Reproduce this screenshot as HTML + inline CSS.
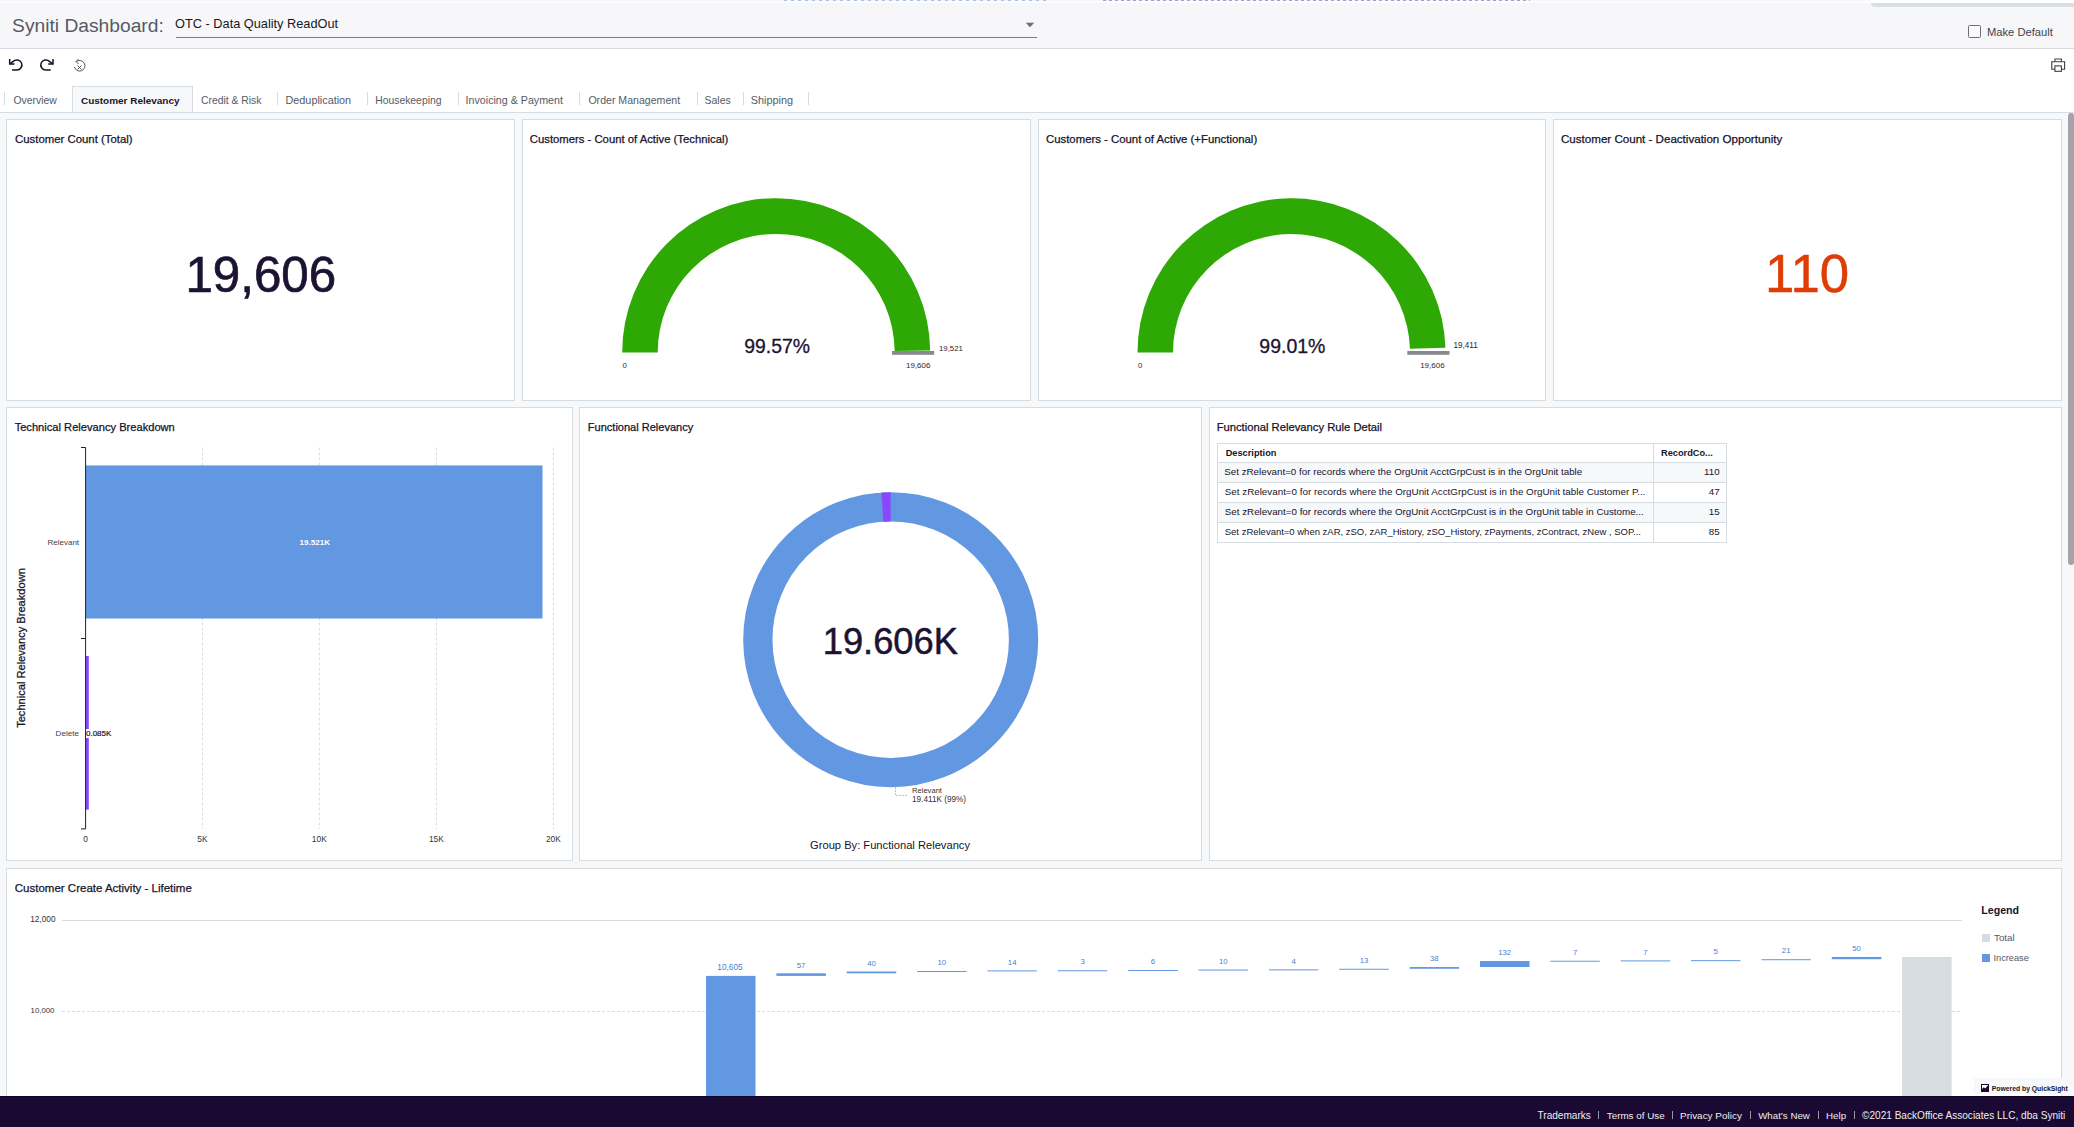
<!DOCTYPE html><html><head><meta charset="utf-8"><style>
html,body{margin:0;padding:0;width:2074px;height:1127px;overflow:hidden;background:#f7f8fa;}
body{position:relative;font-family:"Liberation Sans",sans-serif;}
.t{position:absolute;white-space:nowrap;line-height:1;}
.s{-webkit-text-stroke:0.25px currentColor;}
.r{position:absolute;}
</style></head><body>
<div class="r" style="left:0px;top:0px;width:2074px;height:48px;background:#f7f7fa;"></div><div class="r" style="left:0px;top:1px;width:2074px;height:2px;background:#fdfdfe;"></div><div class="r" style="left:780px;top:0px;width:270px;height:1px;background:repeating-linear-gradient(90deg,transparent 0 4px,rgba(80,120,220,.45) 4px 7px);"></div><div class="r" style="left:1100px;top:0px;width:430px;height:1px;background:repeating-linear-gradient(90deg,transparent 0 3px,rgba(70,90,220,.55) 3px 6px);"></div><div class="r" style="left:0px;top:48px;width:2074px;height:1px;background:#d5dde2;"></div><div class="r" style="left:1871px;top:0px;width:203px;height:3px;background:#fff;"></div><div class="r" style="left:1871px;top:3px;width:203px;height:4px;background:#d9e0e4;border-bottom-left-radius:4px;"></div><div id="t1" class="t " style="left:12.10px;top:16px;font-size:19.231px;color:#545b64;">Syniti Dashboard:</div><div id="t2" class="t " style="left:175.10px;top:18px;font-size:12.75px;color:#16191f;">OTC - Data Quality ReadOut</div><div class="r" style="left:176px;top:37px;width:861px;height:1px;background:#7d7d80;"></div><svg class="r" style="left:0;top:0" width="2074" height="1127" ><path d="M1025.8 22.8 L1034.2 22.8 L1030 27.2 Z" fill="#6e6e72"/></svg><div class="r" style="left:1968px;top:25px;width:13px;height:13px;box-sizing:border-box;border:1px solid #6b6f76;border-radius:1.5px;background:#fafafa;"></div><div id="t3" class="t " style="left:1986.98px;top:27px;font-size:11.186px;color:#3f444b;">Make Default</div><div class="r" style="left:0px;top:49px;width:2074px;height:63px;background:#fff;"></div><svg class="r" style="left:0;top:50px" width="100" height="30">
<g fill="none" stroke="#16132b" stroke-width="1.5" stroke-linejoin="miter">
<path d="M9.67 8.9 V14.0 H14.5"/>
<path d="M9.9 13.8 L13.28 11.38 A5.05 5.05 0 1 1 16.85 20.0 H12"/>
<path d="M53.03 8.9 V14.0 H48.2"/>
<path d="M52.8 13.8 L49.42 11.38 A5.05 5.05 0 1 0 45.85 20.0 H50.7"/>
</g>
<g fill="none" stroke="#555" stroke-width="1">
<path d="M78.5 9 L76 11.5 L78.5 14"/>
<path d="M76.5 11.5 A5.3 5.3 0 1 1 74.5 17"/>
<path d="M77.5 15.5 L81.5 19.5 M81.5 15.5 L77.5 19.5"/>
</g></svg><svg class="r" style="left:2040px;top:50px" width="34" height="30">
<g fill="none" stroke="#3d3d45" stroke-width="1.1">
<path d="M14.9 11.8 V9 H21.4 V11.8"/>
<path d="M14.9 19.3 H11.8 V11.8 H24.6 V19.3 H21.4"/>
<rect x="14.9" y="15.9" width="6.5" height="5.4"/>
</g></svg><div class="r" style="left:72px;top:86px;width:121px;height:27px;box-sizing:border-box;border:1px solid #d5dde2;border-bottom:none;background:#f7f8fa;"></div><div class="r" style="left:0px;top:112px;width:2074px;height:1px;background:#d5dde2;"></div><div class="r" style="left:4px;top:92px;width:1px;height:13px;background:#d5dde2;"></div><div class="r" style="left:277px;top:92px;width:1px;height:13px;background:#d5dde2;"></div><div class="r" style="left:367px;top:92px;width:1px;height:13px;background:#d5dde2;"></div><div class="r" style="left:458px;top:92px;width:1px;height:13px;background:#d5dde2;"></div><div class="r" style="left:579px;top:92px;width:1px;height:13px;background:#d5dde2;"></div><div class="r" style="left:697px;top:92px;width:1px;height:13px;background:#d5dde2;"></div><div class="r" style="left:743px;top:92px;width:1px;height:13px;background:#d5dde2;"></div><div class="r" style="left:808px;top:92px;width:1px;height:13px;background:#d5dde2;"></div><div id="t4" class="t " style="left:13.38px;top:96px;font-size:10.435px;color:#545b64;">Overview</div><div id="t5" class="t " style="left:201.00px;top:96px;font-size:10.379px;color:#545b64;">Credit &amp; Risk</div><div id="t6" class="t " style="left:285.50px;top:95px;font-size:10.846px;color:#545b64;">Deduplication</div><div id="t7" class="t " style="left:375.24px;top:96px;font-size:10.366px;color:#545b64;">Housekeeping</div><div id="t8" class="t " style="left:465.60px;top:95px;font-size:10.684px;color:#545b64;">Invoicing &amp; Payment</div><div id="t9" class="t " style="left:588.38px;top:95px;font-size:10.585px;color:#545b64;">Order Management</div><div id="t10" class="t " style="left:704.50px;top:95px;font-size:10.5px;color:#545b64;">Sales</div><div id="t11" class="t " style="left:750.74px;top:95px;font-size:10.902px;color:#545b64;">Shipping</div><div id="t12" class="t " style="left:81.00px;top:96px;font-size:9.965px;color:#16132b;font-weight:700;">Customer Relevancy</div><div class="r" style="left:0px;top:113px;width:2074px;height:983px;background:#f7f8fa;"></div><div class="r" style="left:6px;top:119px;width:509px;height:282px;box-sizing:border-box;border:1px solid #d5dde2;background:#fff;"></div><div class="r" style="left:522px;top:119px;width:509px;height:282px;box-sizing:border-box;border:1px solid #d5dde2;background:#fff;"></div><div class="r" style="left:1038px;top:119px;width:508px;height:282px;box-sizing:border-box;border:1px solid #d5dde2;background:#fff;"></div><div class="r" style="left:1553px;top:119px;width:509px;height:282px;box-sizing:border-box;border:1px solid #d5dde2;background:#fff;"></div><div class="r" style="left:6px;top:407px;width:567px;height:454px;box-sizing:border-box;border:1px solid #d5dde2;background:#fff;"></div><div class="r" style="left:579px;top:407px;width:623px;height:454px;box-sizing:border-box;border:1px solid #d5dde2;background:#fff;"></div><div class="r" style="left:1209px;top:407px;width:853px;height:454px;box-sizing:border-box;border:1px solid #d5dde2;background:#fff;"></div><div class="r" style="left:6px;top:868px;width:2056px;height:260px;box-sizing:border-box;border:1px solid #d5dde2;background:#fff;"></div><div id="t13" class="t s" style="left:15.00px;top:134px;font-size:11.384px;color:#16132b;">Customer Count (Total)</div><div id="t14" class="t s" style="left:529.82px;top:134px;font-size:11.319px;color:#16132b;">Customers - Count of Active (Technical)</div><div id="t15" class="t s" style="left:1046.00px;top:134px;font-size:11.362px;color:#16132b;">Customers - Count of Active (+Functional)</div><div id="t16" class="t s" style="left:1561.00px;top:134px;font-size:11.598px;color:#16132b;">Customer Count - Deactivation Opportunity</div><div id="t17" class="t s" style="left:14.64px;top:422px;font-size:11.138px;color:#16132b;">Technical Relevancy Breakdown</div><div id="t18" class="t s" style="left:587.82px;top:422px;font-size:11.044px;color:#16132b;">Functional Relevancy</div><div id="t19" class="t s" style="left:1216.64px;top:422px;font-size:11.242px;color:#16132b;">Functional Relevancy Rule Detail</div><div id="t20" class="t s" style="left:14.82px;top:883px;font-size:11.518px;color:#16132b;">Customer Create Activity - Lifetime</div><div id="t21" class="t " style="left:-39.22px;width:600px;text-align:center;top:250px;font-size:49.283px;color:#1b1331;-webkit-text-stroke:0.7px currentColor;">19,606</div><div id="t22" class="t " style="left:1507.14px;width:600px;text-align:center;top:248px;font-size:52.767px;color:#e03c06;-webkit-text-stroke:0.5px currentColor;">110</div><svg class="r" style="left:0;top:0" width="2074" height="1127" ><path d="M622.20 352.50 A154 154 0 0 1 930.19 350.42 L894.69 350.90 A118.5 118.5 0 0 0 657.70 352.50 Z" fill="#2ea805"/><rect x="892.0" y="351.0" width="42.2" height="3.8" fill="#8a898f"/></svg><div id="t23" class="t " style="left:622.60px;top:362px;font-size:7.8px;color:#2b2838;">0</div><div id="t24" class="t " style="right:1143.62px;top:362px;font-size:7.972px;color:#2b2838;">19,606</div><div id="t25" class="t " style="left:939.00px;top:345px;font-size:7.828px;color:#2b2838;">19,521</div><div id="t26" class="t " style="left:477.10px;width:600px;text-align:center;top:337px;font-size:19.402px;color:#1b1331;-webkit-text-stroke:0.3px currentColor;">99.57%</div><svg class="r" style="left:0;top:0" width="2074" height="1127" ><path d="M1137.50 352.50 A154 154 0 0 1 1445.43 347.71 L1409.94 348.82 A118.5 118.5 0 0 0 1173.00 352.50 Z" fill="#2ea805"/><rect x="1407.3" y="351.0" width="42.2" height="3.8" fill="#8a898f"/></svg><div id="t27" class="t " style="left:1137.90px;top:362px;font-size:7.8px;color:#2b2838;">0</div><div id="t28" class="t " style="right:629.40px;top:362px;font-size:8.012px;color:#2b2838;">19,606</div><div id="t29" class="t " style="left:1453.48px;top:342px;font-size:8.149px;color:#2b2838;">19,411</div><div id="t30" class="t " style="left:992.40px;width:600px;text-align:center;top:337px;font-size:19.531px;color:#1b1331;-webkit-text-stroke:0.3px currentColor;">99.01%</div><svg class="r" style="left:0;top:0" width="2074" height="1127" ><line x1="202.4" y1="447.5" x2="202.4" y2="829" stroke="#d5dde2" stroke-width="1" stroke-dasharray="3 2"/><line x1="319.3" y1="447.5" x2="319.3" y2="829" stroke="#d5dde2" stroke-width="1" stroke-dasharray="3 2"/><line x1="436.4" y1="447.5" x2="436.4" y2="829" stroke="#d5dde2" stroke-width="1" stroke-dasharray="3 2"/><line x1="553.4" y1="447.5" x2="553.4" y2="829" stroke="#d5dde2" stroke-width="1" stroke-dasharray="3 2"/><rect x="85.6" y="465.4" width="456.9" height="153.1" fill="#6297e2"/><rect x="85.6" y="656" width="3.2" height="153.6" fill="#8948fe"/><path d="M81 447.5 H85.6 V828.9 H81 M81 638.5 H85.6" fill="none" stroke="#222" stroke-width="1"/></svg><div class="r" style="left:86px;top:729px;width:26px;height:9px;background:#fff;"></div><div id="t31" class="t " style="right:1994.96px;top:539px;font-size:7.976px;color:#444;">Relevant</div><div id="t32" class="t " style="right:1995.06px;top:730px;font-size:8.08px;color:#444;">Delete</div><div id="t33" class="t " style="left:86.00px;top:730px;font-size:8.0px;color:#16132b;-webkit-text-stroke:0.2px currentColor;">0.085K</div><div id="t34" class="t " style="left:14.86px;width:600px;text-align:center;top:539px;font-size:8.074px;color:#fff;font-weight:700;">19.521K</div><div id="t35" class="t " style="left:-214.40px;width:600px;text-align:center;top:835px;font-size:8.4px;color:#333;">0</div><div id="t36" class="t " style="left:-97.60px;width:600px;text-align:center;top:835px;font-size:8.4px;color:#333;">5K</div><div id="t37" class="t " style="left:19.30px;width:600px;text-align:center;top:835px;font-size:8.4px;color:#333;">10K</div><div id="t38" class="t " style="left:136.40px;width:600px;text-align:center;top:835px;font-size:8.4px;color:#333;">15K</div><div id="t39" class="t " style="left:253.40px;width:600px;text-align:center;top:835px;font-size:8.4px;color:#333;">20K</div><div class="t s" style="left:22px;top:647.5px;font-size:11.1px;color:#16132b;transform:translate(-50%,-50%) rotate(-90deg);">Technical Relevancy Breakdown</div><svg class="r" style="left:0;top:0" width="2074" height="1127" ><circle cx="890.7" cy="639.7" r="132.85" fill="none" stroke="#6297e2" stroke-width="29.30"/><path d="M882.36 507.11 A132.85 132.85 0 0 1 890.7 506.85" fill="none" stroke="#8948fe" stroke-width="29.30"/><path d="M895.5 787 V795.4 H908" fill="none" stroke="#a9c1ea" stroke-width="1" stroke-dasharray="2 1"/></svg><div id="t40" class="t " style="left:590.34px;width:600px;text-align:center;top:624px;font-size:36.298px;color:#1b1331;-webkit-text-stroke:0.5px currentColor;">19.606K</div><div id="t41" class="t " style="left:912.00px;top:787px;font-size:7.6px;color:#333;">Relevant</div><div id="t42" class="t " style="left:912.00px;top:796px;font-size:8.195px;color:#333;">19.411K (99%)</div><div id="t43" class="t " style="left:590.04px;width:600px;text-align:center;top:840px;font-size:11.164px;color:#16132b;">Group By: Functional Relevancy</div><div class="r" style="left:1217px;top:443px;width:510px;height:100px;box-sizing:border-box;border:1px solid #d5dde2;background:#fff;"></div><div class="r" style="left:1218px;top:463px;width:508px;height:19px;background:#f7f8fa;"></div><div class="r" style="left:1217px;top:462px;width:510px;height:1px;background:#d5dde2;"></div><div class="r" style="left:1218px;top:483px;width:508px;height:19px;background:#fff;"></div><div class="r" style="left:1217px;top:482px;width:510px;height:1px;background:#d5dde2;"></div><div class="r" style="left:1218px;top:503px;width:508px;height:19px;background:#f7f8fa;"></div><div class="r" style="left:1217px;top:502px;width:510px;height:1px;background:#d5dde2;"></div><div class="r" style="left:1218px;top:523px;width:508px;height:19px;background:#fff;"></div><div class="r" style="left:1217px;top:522px;width:510px;height:1px;background:#d5dde2;"></div><div class="r" style="left:1653px;top:443px;width:1px;height:100px;background:#d5dde2;"></div><div id="t44" class="t " style="left:1225.68px;top:449px;font-size:9.248px;color:#16132b;font-weight:700;">Description</div><div id="t45" class="t " style="left:1661.00px;top:449px;font-size:9.242px;color:#16132b;font-weight:700;">RecordCo...</div><div id="t46" class="t " style="left:1224.24px;top:467px;font-size:9.795px;color:#16132b;">Set zRelevant=0 for records where the OrgUnit AcctGrpCust is in the OrgUnit table</div><div id="t47" class="t " style="right:354.40px;top:467px;font-size:9.75px;color:#16132b;">110</div><div id="t48" class="t " style="left:1224.78px;top:487px;font-size:9.822px;color:#16132b;">Set zRelevant=0 for records where the OrgUnit AcctGrpCust is in the OrgUnit table Customer P...</div><div id="t49" class="t " style="right:354.40px;top:487px;font-size:9.75px;color:#16132b;">47</div><div id="t50" class="t " style="left:1224.78px;top:507px;font-size:9.809px;color:#16132b;">Set zRelevant=0 for records where the OrgUnit AcctGrpCust is in the OrgUnit table in Custome...</div><div id="t51" class="t " style="right:354.40px;top:507px;font-size:9.75px;color:#16132b;">15</div><div id="t52" class="t " style="left:1224.78px;top:527px;font-size:9.496px;color:#16132b;">Set zRelevant=0 when zAR, zSO, zAR_History, zSO_History, zPayments, zContract, zNew , SOP...</div><div id="t53" class="t " style="right:354.40px;top:527px;font-size:9.75px;color:#16132b;">85</div><div id="t54" class="t " style="left:30.24px;top:916px;font-size:8.274px;color:#333;">12,000</div><div id="t55" class="t " style="left:30.60px;top:1007px;font-size:7.8px;color:#333;">10,000</div><div id="t56" class="t " style="left:430.03px;width:600px;text-align:center;top:963px;font-size:8.298px;color:#4a7fd0;">10,605</div><div id="t57" class="t " style="left:501.11px;width:600px;text-align:center;top:962px;font-size:7.8px;color:#4a7fd0;">57</div><div id="t58" class="t " style="left:571.47px;width:600px;text-align:center;top:960px;font-size:7.8px;color:#4a7fd0;">40</div><div id="t59" class="t " style="left:641.83px;width:600px;text-align:center;top:959px;font-size:7.8px;color:#4a7fd0;">10</div><div id="t60" class="t " style="left:712.19px;width:600px;text-align:center;top:959px;font-size:7.8px;color:#4a7fd0;">14</div><div id="t61" class="t " style="left:782.55px;width:600px;text-align:center;top:958px;font-size:7.8px;color:#4a7fd0;">3</div><div id="t62" class="t " style="left:852.91px;width:600px;text-align:center;top:958px;font-size:7.8px;color:#4a7fd0;">6</div><div id="t63" class="t " style="left:923.27px;width:600px;text-align:center;top:958px;font-size:7.8px;color:#4a7fd0;">10</div><div id="t64" class="t " style="left:993.63px;width:600px;text-align:center;top:958px;font-size:7.8px;color:#4a7fd0;">4</div><div id="t65" class="t " style="left:1063.99px;width:600px;text-align:center;top:957px;font-size:7.8px;color:#4a7fd0;">13</div><div id="t66" class="t " style="left:1134.35px;width:600px;text-align:center;top:955px;font-size:7.8px;color:#4a7fd0;">38</div><div id="t67" class="t " style="left:1204.71px;width:600px;text-align:center;top:949px;font-size:7.8px;color:#4a7fd0;">132</div><div id="t68" class="t " style="left:1275.07px;width:600px;text-align:center;top:949px;font-size:7.8px;color:#4a7fd0;">7</div><div id="t69" class="t " style="left:1345.43px;width:600px;text-align:center;top:949px;font-size:7.8px;color:#4a7fd0;">7</div><div id="t70" class="t " style="left:1415.79px;width:600px;text-align:center;top:948px;font-size:7.8px;color:#4a7fd0;">5</div><div id="t71" class="t " style="left:1486.15px;width:600px;text-align:center;top:947px;font-size:7.8px;color:#4a7fd0;">21</div><div id="t72" class="t " style="left:1556.51px;width:600px;text-align:center;top:945px;font-size:7.8px;color:#4a7fd0;">50</div><svg class="r" style="left:0;top:0" width="2074" height="1127" ><line x1="62" y1="920.5" x2="1962" y2="920.5" stroke="#d5dde2" stroke-width="1"/><line x1="62" y1="1011.5" x2="1962" y2="1011.5" stroke="#d5dde2" stroke-width="1" stroke-dasharray="3 2"/><rect x="706" y="975.9" width="49.5" height="120.10000000000002" fill="#6297e2"/><rect x="776.4" y="973.31" width="49.5" height="2.59" fill="#6297e2"/><rect x="846.7" y="971.49" width="49.5" height="1.82" fill="#6297e2"/><rect x="917.1" y="971.04" width="49.5" height="1.00" fill="#6297e2"/><rect x="987.4" y="970.40" width="49.5" height="1.00" fill="#6297e2"/><rect x="1057.8" y="970.26" width="49.5" height="1.00" fill="#6297e2"/><rect x="1128.2" y="969.99" width="49.5" height="1.00" fill="#6297e2"/><rect x="1198.5" y="969.54" width="49.5" height="1.00" fill="#6297e2"/><rect x="1268.9" y="969.36" width="49.5" height="1.00" fill="#6297e2"/><rect x="1339.2" y="968.76" width="49.5" height="1.00" fill="#6297e2"/><rect x="1409.6" y="967.04" width="49.5" height="1.73" fill="#6297e2"/><rect x="1480.0" y="961.04" width="49.5" height="6.00" fill="#6297e2"/><rect x="1550.3" y="960.72" width="49.5" height="1.00" fill="#6297e2"/><rect x="1620.7" y="960.40" width="49.5" height="1.00" fill="#6297e2"/><rect x="1691.0" y="960.17" width="49.5" height="1.00" fill="#6297e2"/><rect x="1761.4" y="959.22" width="49.5" height="1.00" fill="#6297e2"/><rect x="1831.8" y="956.95" width="49.5" height="2.27" fill="#6297e2"/><rect x="1902.1" y="956.95" width="49.5" height="139.05" fill="#d5dde2"/></svg><div id="t73" class="t " style="left:1981.24px;top:905px;font-size:10.652px;color:#16132b;font-weight:700;">Legend</div><div class="r" style="left:1982px;top:934px;width:8px;height:8px;background:#d5dde2;"></div><div id="t74" class="t " style="left:1994.00px;top:933px;font-size:9.8px;color:#545b64;">Total</div><div class="r" style="left:1982px;top:954px;width:8px;height:8px;background:#6297e2;"></div><div id="t75" class="t " style="left:1993.46px;top:954px;font-size:9.227px;color:#545b64;">Increase</div><div class="r" style="left:1974px;top:1078px;width:100px;height:16px;background:#f7f8fa;"></div><svg class="r" style="left:1981px;top:1084px" width="8" height="8"><rect x="0.5" y="0.5" width="7" height="7" fill="#fff" stroke="#1b0a33"/><path d="M0.5 7.5 V5.5 L2.8 3.2 L4.2 4.6 L6.5 1.8 L7.5 1.2 V7.5 Z" fill="#1b0a33"/></svg><div id="t76" class="t " style="left:1991.80px;top:1086px;font-size:6.8px;color:#16132b;font-weight:700;">Powered by QuickSight</div><div class="r" style="left:0px;top:1096px;width:2074px;height:31px;background:#1a0932;"></div><div class="r" style="left:0px;top:1096px;width:2074px;height:1px;background:#0e0320;"></div><div id="t77" class="t " style="left:1537.50px;top:1111px;font-size:10.081px;color:#eeeeee;">Trademarks</div><div id="t78" class="t " style="left:1606.76px;top:1111px;font-size:9.833px;color:#eeeeee;">Terms of Use</div><div id="t79" class="t " style="left:1680.00px;top:1111px;font-size:9.944px;color:#eeeeee;">Privacy Policy</div><div id="t80" class="t " style="left:1758.14px;top:1111px;font-size:9.749px;color:#eeeeee;">What&#8217;s New</div><div id="t81" class="t " style="left:1826.00px;top:1111px;font-size:9.768px;color:#eeeeee;">Help</div><div id="t82" class="t " style="left:1862.00px;top:1111px;font-size:10.098px;color:#eeeeee;">&#169;2021 BackOffice Associates LLC, dba Syniti</div><div class="r" style="left:1598px;top:1111px;width:1px;height:8px;background:#9d96a8;"></div><div class="r" style="left:1672px;top:1111px;width:1px;height:8px;background:#9d96a8;"></div><div class="r" style="left:1750px;top:1111px;width:1px;height:8px;background:#9d96a8;"></div><div class="r" style="left:1818px;top:1111px;width:1px;height:8px;background:#9d96a8;"></div><div class="r" style="left:1854px;top:1111px;width:1px;height:8px;background:#9d96a8;"></div><div class="r" style="left:2068px;top:113px;width:6px;height:452px;background:#a4a3a8;border-radius:3px;"></div>
</body></html>
